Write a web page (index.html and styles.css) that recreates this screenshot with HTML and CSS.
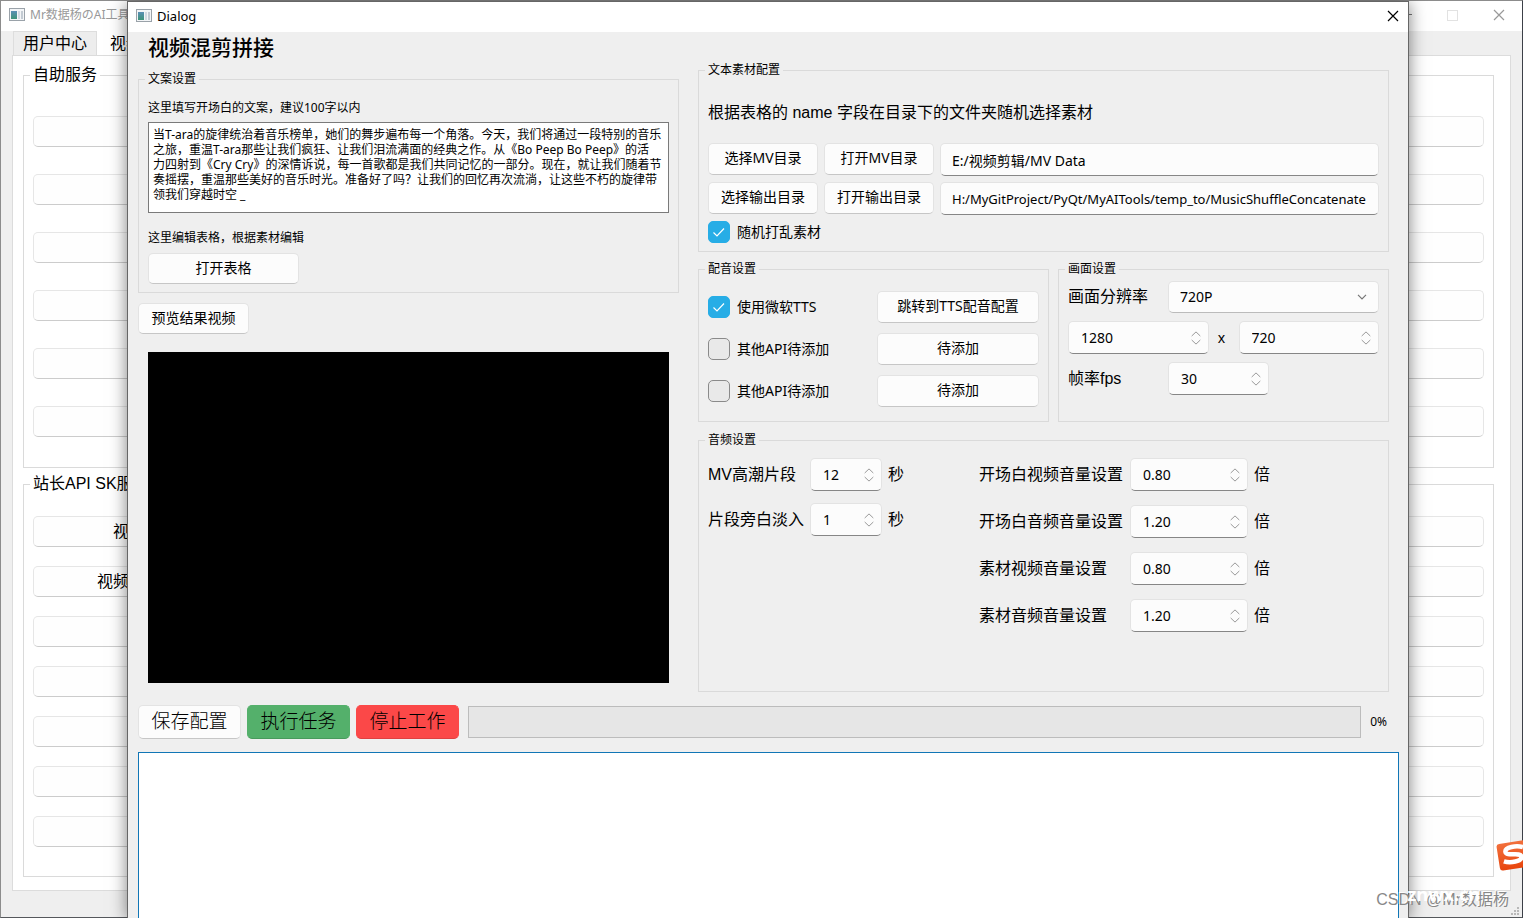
FILE: index.html
```html
<!DOCTYPE html>
<html lang="zh-CN">
<head>
<meta charset="utf-8">
<title>视频混剪拼接</title>
<link rel="stylesheet" href="styles.css">
</head>
<body>
<svg width="0" height="0" class="defs" aria-hidden="true">
  <symbol id="win" viewBox="0 0 16 14">
    <defs><linearGradient id="wg" x1="0" y1="0" x2="0" y2="1"><stop offset="0" stop-color="#5a8fb5"/><stop offset="1" stop-color="#3d9478"/></linearGradient></defs>
    <rect x=".5" y=".5" width="15" height="12" fill="#f3f5f7" stroke="#9aa2a9"/>
    <rect x="2" y="3" width="6" height="8" fill="url(#wg)"/>
    <rect x="9" y="3" width="2" height="8" fill="#d3dae2"/><rect x="12" y="3" width="2" height="8" fill="#c3cbd3"/>
  </symbol>
  <symbol id="x" viewBox="0 0 12 12"><path d="M1 1L11 11M11 1L1 11" fill="none" stroke="currentColor" stroke-width="1.2"/></symbol>
  <symbol id="spin" viewBox="0 0 10 14"><path d="M.7 5L5 .9L9.300 5M.7 9L5 13.100L9.300 9" fill="none" stroke="#999" stroke-width="1"/></symbol>
</svg>

<div class="window">
  <header class="titlebar muted">
    <svg class="app-icon"><use href="#win"/></svg><span>Mr数据杨のAI工具</span>
    <span class="window-controls">
      <button class="ctl" aria-label="最小化"><svg width="10" height="12"><path d="M0 5.500h10" stroke="#777"/></svg></button>
      <button class="ctl faint" aria-label="最大化"><svg width="11" height="11"><rect x=".5" y=".5" width="10" height="10" fill="none" stroke="currentColor"/></svg></button>
      <button class="ctl" aria-label="关闭"><svg width="12" height="12"><use href="#x"/></svg></button>
    </span>
  </header>
  <nav class="tabs"><button class="tab">用户中心</button><button class="tab active">视频</button></nav>
  <main class="pane">
    <fieldset class="service loose"><legend>自助服务</legend>
      <button aria-label="服务一"></button><button aria-label="服务二"></button><button aria-label="服务三"></button><button aria-label="服务四"></button><button aria-label="服务五"></button><button aria-label="服务六"></button>
    </fieldset>
    <fieldset class="service tight"><legend>站长API SK服</legend>
      <button class="indent-l">视</button><button class="indent-s">视频</button><button aria-label="工具三"></button><button aria-label="工具四"></button><button aria-label="工具五"></button><button aria-label="工具六"></button><button aria-label="工具七"></button>
    </fieldset>
  </main>
  <svg class="grip" viewBox="0 0 8 8" aria-hidden="true"><path d="M6 0h2v2h-2zM3 3h2v2h-2zM6 3h2v2h-2zM0 6h2v2h-2zM3 6h2v2h-2zM6 6h2v2h-2z" fill="#b8b8b8"/></svg>
</div>

<section class="dialog" role="dialog" aria-label="Dialog">
  <header class="titlebar">
    <svg class="app-icon"><use href="#win"/></svg><span>Dialog</span>
    <button class="ctl close" aria-label="关闭"><svg width="12" height="12"><use href="#x"/></svg></button>
  </header>
  <div class="content">
    <div class="columns">
      <div class="left">
        <h1>视频混剪拼接</h1>
        <fieldset class="group copy"><legend>文案设置</legend>
          <label for="copy">这里填写开场白的文案，建议100字以内</label>
          <textarea id="copy" spellcheck="false">当T-ara的旋律统治着音乐榜单，她们的舞步遍布每一个角落。今天，我们将通过一段特别的音乐
之旅，重温T-ara那些让我们疯狂、让我们泪流满面的经典之作。从《Bo Peep Bo Peep》的活
力四射到《Cry Cry》的深情诉说，每一首歌都是我们共同记忆的一部分。现在，就让我们随着节
奏摇摆，重温那些美好的音乐时光。准备好了吗？让我们的回忆再次流淌，让这些不朽的旋律带
领我们穿越时空 _</textarea>
          <p>这里编辑表格，根据素材编辑</p>
          <button class="btn sheet">打开表格</button>
        </fieldset>
        <button class="btn preview">预览结果视频</button>
        <div class="video"></div>
      </div>
      <div class="right">
        <fieldset class="group material"><legend>文本素材配置</legend>
          <p class="big">根据表格的 name 字段在目录下的文件夹随机选择素材</p>
          <div class="paths">
            <button class="btn">选择MV目录</button><button class="btn">打开MV目录</button><input class="field" aria-label="MV目录" value="E:/视频剪辑/MV Data">
            <button class="btn">选择输出目录</button><button class="btn">打开输出目录</button><input class="field long" id="out" aria-label="输出目录" value="H:/MyGitProject/PyQt/MyAITools/temp_to/MusicShuffleConcatenate">
          </div>
          <label class="check"><input type="checkbox" checked>随机打乱素材</label>
        </fieldset>
        <div class="pair">
          <fieldset class="group voice"><legend>配音设置</legend>
            <label class="check"><input type="checkbox" checked>使用微软TTS</label><button class="btn">跳转到TTS配音配置</button>
            <label class="check"><input type="checkbox">其他API待添加</label><button class="btn">待添加</button>
            <label class="check"><input type="checkbox">其他API待添加</label><button class="btn">待添加</button>
          </fieldset>
          <fieldset class="group picture"><legend>画面设置</legend>
            <div class="line"><label class="big" for="res">画面分辨率</label><select id="res" class="field"><option>720P</option></select></div>
            <div class="line size"><span class="spin"><input class="field" type="number" aria-label="宽" value="1280"><svg><use href="#spin"/></svg></span><span class="times">x</span><span class="spin"><input class="field" type="number" aria-label="高" value="720"><svg><use href="#spin"/></svg></span></div>
            <div class="line"><label class="big" for="fps">帧率fps</label><span class="spin fps"><input id="fps" class="field" type="number" value="30"><svg><use href="#spin"/></svg></span></div>
          </fieldset>
        </div>
        <fieldset class="group audio"><legend>音频设置</legend>
          <div class="audio-cols big">
            <div class="clips">
              <label for="a1">MV高潮片段</label><span class="spin"><input id="a1" class="field" type="number" value="12"><svg><use href="#spin"/></svg></span><span>秒</span>
              <label for="a2">片段旁白淡入</label><span class="spin"><input id="a2" class="field" type="number" value="1"><svg><use href="#spin"/></svg></span><span>秒</span>
            </div>
            <div class="volumes">
              <label for="v1">开场白视频音量设置</label><span class="spin"><input id="v1" class="field" type="number" step="0.01" value="0.80"><svg><use href="#spin"/></svg></span><span>倍</span>
              <label for="v2">开场白音频音量设置</label><span class="spin"><input id="v2" class="field" type="number" step="0.01" value="1.20"><svg><use href="#spin"/></svg></span><span>倍</span>
              <label for="v3">素材视频音量设置</label><span class="spin"><input id="v3" class="field" type="number" step="0.01" value="0.80"><svg><use href="#spin"/></svg></span><span>倍</span>
              <label for="v4">素材音频音量设置</label><span class="spin"><input id="v4" class="field" type="number" step="0.01" value="1.20"><svg><use href="#spin"/></svg></span><span>倍</span>
            </div>
          </div>
        </fieldset>
      </div>
    </div>
    <div class="actions">
      <button class="btn">保存配置</button><button class="btn run">执行任务</button><button class="btn stop">停止工作</button>
      <div class="progress" role="progressbar" aria-label="进度" aria-valuenow="0"></div><span class="percent">0%</span>
    </div>
    <textarea class="log" aria-label="日志"></textarea>
  </div>
</section>

<svg class="ime" viewBox="0 0 32 32" aria-hidden="true">
  <defs><linearGradient id="sg" x1="0" y1="0" x2="0" y2="1"><stop offset="0" stop-color="#f2703c"/><stop offset="1" stop-color="#e8450c"/></linearGradient></defs>
  <g transform="rotate(-9 16 16)"><rect x="2" y="3" width="30" height="27" rx="3" fill="url(#sg)"/>
  <path d="M28 10C22 7 10 7 10 12C10 17 25 14 25 19C25 24 13 24 7 21" fill="none" stroke="#fff" stroke-width="4.500"/></g>
</svg>
<div class="mark author">CSDN @Mr数据杨</div>
<div class="mark site">znwx.cn</div>
<script src="main.js"></script>
</body>
</html>
```
FILE: styles.css
```css
* { box-sizing: border-box; }
body {
  margin: 0;
  height: 100vh;
  position: relative;
  overflow: hidden;
  background: #efefef;
  color: #000;
  font: 14px/20px "Noto Sans", "Noto Sans CJK SC", sans-serif;
}
button, input, select, textarea { font: inherit; color: inherit; }
p { margin: 0; }
fieldset { margin: 0; min-width: 0; border: 1px solid #dadada; }
.defs { position: absolute; }

.window {
  height: 100vh;
  display: flex;
  flex-direction: column;
  border: 1px solid #8c8c8c;
  border-right-color: #3c4048;
  border-bottom-color: #55585c;
}
.titlebar {
  height: 30px;
  flex: none;
  display: flex;
  align-items: center;
  gap: 5px;
  padding: 0 8px 2px;
  background: #fff;
  font-size: 13px;
}
.muted { color: #999; font-size: 12px; }
.app-icon { width: 16px; height: 14px; }
.ctl { display: flex; border: 0; padding: 0; background: none; }
.close { margin-left: auto; }
.window-controls { margin-left: auto; display: flex; align-items: center; gap: 35px; padding-right: 9px; }
.faint { color: #e2e2e2; }
.tabs { display: flex; padding-left: 12px; flex: none; }
.tab {
  height: 24px;
  padding: 0 9px;
  border: 1px solid #ddd;
  border-bottom: 0;
  background: #ededed;
  font: 16px/22px "Liberation Sans", "Noto Sans CJK SC", sans-serif;
}
.active { background: #fff; padding: 0 12px; border-color: #fff; }
.pane {
  flex: 1;
  display: flex;
  flex-direction: column;
  margin: 0 11px 26px;
  padding: 9px 16px 13px 10px;
  border: 1px solid #dcdcdc;
  background: #fff;
}
.service {
  flex: 1;
  display: flex;
  flex-direction: column;
  padding: 0 9px;
  font: 16px/20px "Liberation Sans", "Noto Sans CJK SC", sans-serif;
}
.service + .service { margin-top: 6px; }
.service legend { padding: 0 3px; margin-left: -3px; }
.service button {
  display: block;
  width: 100%;
  height: 31px;
  padding: 0;
  text-align: left;
  background: #fefefe;
  border: 1px solid #e6e6e6;
  border-bottom-color: #ccc;
  border-radius: 5px;
}
.loose legend + button { margin-top: 31px; }
.loose button + button { margin-top: 27px; }
.tight legend + button { margin-top: 22px; }
.tight button + button { margin-top: 19px; }
.service .indent-l { padding-left: 79px; }
.service .indent-s { padding-left: 63px; }
.grip { position: absolute; right: 4px; bottom: 3px; width: 8px; height: 8px; }

.dialog {
  position: absolute;
  top: 1px;
  right: 114px;
  bottom: 0;
  left: 127px;
  display: flex;
  flex-direction: column;
  border: 1px solid #666;
  border-bottom: 0;
  background: #efefef;
  box-shadow: 0 2px 16px rgba(0, 0, 0, .5);
}
.dialog .close { margin-right: 1px; }
.content { flex: 1; display: flex; flex-direction: column; padding: 0 9px 0 10px; }
.columns { display: grid; grid-template-columns: minmax(0, 541fr) minmax(0, 691fr); gap: 19px; padding-right: 10px; }
h1 { margin: 2px 0 13px 10px; font: 500 21px/24px "Noto Sans CJK SC", sans-serif; }
.group { padding: 0 9px; }
.group legend { margin-left: -3px; padding: 0 3px; font-size: 12px; line-height: 16px; }
.copy { font-size: 12px; line-height: 16px; padding-bottom: 8px; }
.copy label { display: block; margin: 13px 0 6px; }
.copy p { margin: 17px 0 7px; }
.copy textarea {
  display: block;
  width: 100%;
  height: 91px;
  padding: 4px 0 0 4px;
  border: 1px solid #7a7a7a;
  background: #fff;
  line-height: 15px;
  overflow: hidden;
  resize: none;
}
.btn, .field {
  height: 32px;
  padding: 0 11px;
  font-size: 14px;
  line-height: 20px;
  background: #fcfcfc;
  border: 1px solid #e3e3e3;
  border-bottom-color: #c6c6c6;
  border-radius: 5px;
}
.btn { padding: 0 0 2px; }
.sheet { width: 151px; height: 31px; }
.preview { width: 111px; height: 31px; margin: 10px 0 18px; }
.video { height: 331px; margin: 0 10px 9px; background: #000; }
.field { width: 100%; min-width: 0; height: 33px; border-bottom-color: #868686; outline: 0; }
.long { font-size: 13px; }
.big { font: 16px/20px "Liberation Sans", "Noto Sans CJK SC", sans-serif; }

.right { display: flex; flex-direction: column; padding-top: 30px; }
.material { padding-bottom: 8px; }
.material .big { margin: 25px 0 20px; }
.paths { display: grid; grid-template-columns: 110px 110px minmax(0, 1fr); gap: 6px; }
.check { display: flex; align-items: center; gap: 7px; }
.check input {
  appearance: none;
  width: 22px;
  height: 22px;
  margin: 0;
  border: 1px solid #8a8a8a;
  border-radius: 5px;
  background: #e9e9e9;
}
.check input:checked {
  border-color: #27ade6;
  background: #27ade6 url("data:image/svg+xml,%3Csvg xmlns='http://www.w3.org/2000/svg' viewBox='0 0 20 20'%3E%3Cpath d='M4.500 10.500L8 14L15 6.500' fill='none' stroke='white' stroke-width='1.200'/%3E%3C/svg%3E");
}
.material .check { margin-top: 6px; }
.pair { display: grid; grid-template-columns: minmax(0, 351fr) minmax(0, 331fr); gap: 9px; margin-top: 9px; }
.voice .check { float: left; height: 32px; }
.voice .btn { display: block; width: 162px; margin: 0 0 10px auto; }
.voice .btn:last-child { margin-bottom: 14px; }
.voice legend { margin-bottom: 14px; }
.picture legend { margin-bottom: 4px; }
.line { display: flex; align-items: center; margin-bottom: 8px; }
.line .big { width: 100px; }
.line select {
  flex: 1;
  width: auto;
  height: 32px;
  appearance: none;
  border-bottom-color: #bbb;
  background: #fcfcfc url("data:image/svg+xml,%3Csvg xmlns='http://www.w3.org/2000/svg' width='10' height='6'%3E%3Cpath d='M1 .8L5 4.800L9 .8' fill='none' stroke='%23777' stroke-width='1.200'/%3E%3C/svg%3E") no-repeat right 11px center;
}
.times { width: 30px; text-align: center; flex: none; padding-right: 4px; }
.size .spin { flex: 1; }
.fps { width: 101px; }
.spin { position: relative; display: block; }
.spin svg { position: absolute; right: 8px; top: 10px; width: 10px; height: 14px; }
.spin input { appearance: textfield; display: block; padding-left: 12px; font-family: "Noto Sans", sans-serif; }
.spin input::-webkit-inner-spin-button { appearance: none; display: none; }
.audio { flex: 1; margin-top: 10px; }
.audio-cols { display: grid; grid-template-columns: 271px minmax(0, 1fr); align-items: start; padding-top: 10px; }
.clips, .volumes { display: grid; align-items: center; column-gap: 6px; }
.clips { grid-template-columns: 96px 72px auto; row-gap: 12px; }
.volumes { grid-template-columns: 145px 118px auto; row-gap: 14px; }

.actions { display: flex; align-items: center; gap: 6px; margin-top: 13px; padding-right: 12px; }
.actions .btn { width: 103px; height: 34px; font-size: 19px; font-weight: 300; }
.actions .run { background: #54b06b; border-color: #54b06b #54b06b #489a5c; }
.actions .stop { background: #fb4848; border-color: #fb4848 #fb4848 #de4040; }
.progress { flex: 1; height: 32px; margin-left: 3px; background: #e6e6e6; border: 1px solid #bcbcbc; }
.percent { font-size: 12px; margin-left: 3px; }
.log {
  flex: 1;
  margin-top: 13px;
  border: 1px solid #1176b6;
  border-bottom: 0;
  background: #fff;
  outline: 0;
  resize: none;
}

.ime { position: absolute; right: -5px; bottom: 47px; width: 32px; height: 32px; }
.mark { position: absolute; white-space: nowrap; }
.site { right: 43px; bottom: 12px; color: #fff; font: 700 18px/24px "Noto Sans", sans-serif; }
.author { right: 14px; bottom: 7px; color: #888; font: 16px/22px "Liberation Sans", "Noto Sans CJK SC", sans-serif; text-shadow: -1px -1px #fff; }
```
FILE: main.js
```js
const out = document.getElementById('out');
out.scrollLeft = out.scrollWidth;
```
